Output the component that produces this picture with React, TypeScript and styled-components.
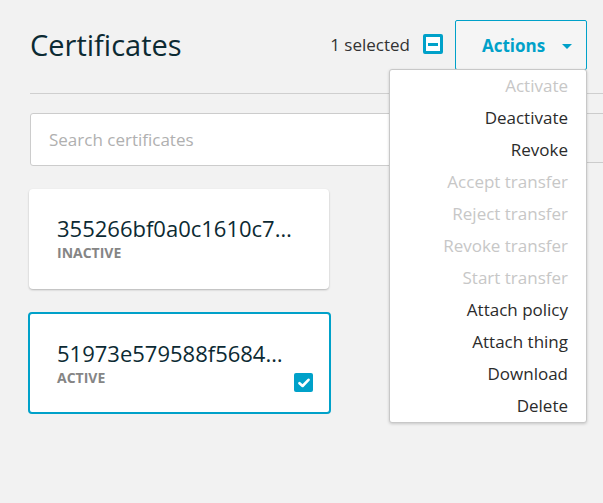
import React from "react";
import styled, { createGlobalStyle } from "styled-components";

const Global = createGlobalStyle`
  html, body { margin: 0; padding: 0; background: #f2f2f2; overflow: hidden; }
  body { font-family: "Open Sans", "Noto Sans", sans-serif; width: 603px; height: 503px; }
`;

const Page = styled.div`
  padding: 20px 0 0 30px;
  width: 573px;
  height: 483px;
  overflow: hidden;
  display: flex;
  flex-direction: column;
`;

const Header = styled.div`
  display: flex;
  align-items: center;
  justify-content: space-between;
  height: 50px;
  flex-shrink: 0;
  padding-right: 16px;
`;

const Title = styled.h1`
  margin: 0;
  font-size: 29px;
  font-weight: 400;
  color: #0c2a33;
  margin-top: -2px;
`;

const Tools = styled.div`
  display: flex;
  align-items: center;
`;

const SelectedText = styled.span`
  font-size: 17px;
  color: #333;
  margin-right: 13px;
  margin-top: -1px;
`;

const Indeterminate = styled.span`
  box-sizing: border-box;
  width: 20px;
  height: 20px;
  border: 3px solid #00a1c9;
  border-radius: 2px;
  background: #fff;
  display: flex;
  align-items: center;
  justify-content: center;
  margin-right: 12px;
  margin-top: -2px;
  &::after {
    content: "";
    width: 10px;
    height: 3px;
    background: #00a1c9;
  }
`;

const Dropdown = styled.div`
  position: relative;
`;

const ActionsButton = styled.button`
  box-sizing: border-box;
  width: 132px;
  height: 50px;
  border: 1px solid #00a1c9;
  border-radius: 2px;
  background: #f5f5f5;
  color: #00a1c9;
  font-family: inherit;
  font-size: 17px;
  font-weight: 700;
  display: flex;
  align-items: center;
  padding: 0 0 0 26px;
  cursor: pointer;
`;

const Caret = styled.span`
  margin-left: 17px;
  width: 0;
  height: 0;
  border-left: 5px solid transparent;
  border-right: 5px solid transparent;
  border-top: 5px solid #00a1c9;
  margin-top: 2px;
`;

const Menu = styled.ul`
  position: absolute;
  top: 49px;
  right: 0;
  width: 198px;
  box-sizing: border-box;
  margin: 0;
  padding: 0;
  list-style: none;
  background: #fff;
  border: 1px solid #c8c8c8;
  border-radius: 3px;
  box-shadow: 0 1px 3px rgba(0, 0, 0, 0.18);
  z-index: 10;
`;

const MenuItem = styled.li<{ $disabled?: boolean }>`
  height: 32px;
  line-height: 32px;
  text-align: right;
  padding-right: 18px;
  font-size: 17px;
  color: ${(p) => (p.$disabled ? "#c7c7c7" : "#2b2b2b")};
`;

const Divider = styled.hr`
  margin: 23px 0 0 0;
  border: none;
  border-top: 1px solid #cfcfcf;
  width: 590px;
  flex-shrink: 0;
`;

const SearchRow = styled.div`
  margin-top: 19px;
  display: flex;
  align-items: flex-start;
  gap: 10px;
  width: 640px;
  flex-shrink: 0;
`;

const SearchInput = styled.input`
  box-sizing: border-box;
  flex: 1;
  min-width: 0;
  height: 53px;
  border: 1px solid #cccccc;
  border-radius: 3px;
  background: #fff;
  padding: 0 18px;
  font-family: inherit;
  font-size: 17px;
  color: #333;
  &::placeholder { color: #b0b0b0; }
  outline: none;
`;

const SideButton = styled.button`
  box-sizing: border-box;
  width: 90px;
  height: 50px;
  border: 1px solid #cccccc;
  border-radius: 2px;
  background: #f0f0f0;
  padding: 0 0 0 21px;
  display: flex;
  align-items: center;
  flex-shrink: 0;
`;

const Cards = styled.div`
  margin-top: 23px;
  display: flex;
  flex-direction: column;
  gap: 23px;
  align-items: flex-start;
`;

const Card = styled.div<{ $selected?: boolean }>`
  position: relative;
  box-sizing: border-box;
  width: ${(p) => (p.$selected ? "303px" : "300px")};
  height: ${(p) => (p.$selected ? "102px" : "100px")};
  margin-left: ${(p) => (p.$selected ? "-2px" : "-1px")};
  background: #fff;
  border-radius: 4px;
  border: ${(p) => (p.$selected ? "2px solid #00a1c9" : "none")};
  box-shadow: ${(p) => (p.$selected ? "none" : "0 1px 2px rgba(0,0,0,0.25)")};
  padding: ${(p) => (p.$selected ? "24px 0 0 27px" : "24px 0 0 28px")};
`;

const CardId = styled.div`
  font-size: 22px;
  color: #0c2a33;
  line-height: normal;
  white-space: nowrap;
`;

const Status = styled.div`
  font-size: 14px;
  font-weight: 700;
  color: #858585;
  line-height: normal;
`;

const CheckBox = styled.span`
  position: absolute;
  right: 16px;
  bottom: 20px;
  width: 19px;
  height: 19px;
  border-radius: 2px;
  background: #00a1c9;
  display: flex;
  align-items: center;
  justify-content: center;
`;

const items: [string, boolean][] = [
  ["Activate", true],
  ["Deactivate", false],
  ["Revoke", false],
  ["Accept transfer", true],
  ["Reject transfer", true],
  ["Revoke transfer", true],
  ["Start transfer", true],
  ["Attach policy", false],
  ["Attach thing", false],
  ["Download", false],
  ["Delete", false],
];

export default function App() {
  return (
    <>
      <Global />
      <Page>
        <Header>
          <Title>Certificates</Title>
          <Tools>
            <SelectedText>1 selected</SelectedText>
            <Indeterminate />
            <Dropdown>
              <ActionsButton>
                Actions
                <Caret />
              </ActionsButton>
              <Menu>
                {items.map(([label, disabled]) => (
                  <MenuItem key={label} $disabled={disabled}>
                    {label}
                  </MenuItem>
                ))}
              </Menu>
            </Dropdown>
          </Tools>
        </Header>
        <Divider />
        <SearchRow>
          <SearchInput placeholder="Search certificates" />
          <SideButton aria-label="Filter">
            <svg width="14" height="14" viewBox="0 0 14 14">
              <path d="M1 4 H13 M3 8 H11 M5 12 H9" stroke="#444" strokeWidth="1.5" fill="none" />
            </svg>
          </SideButton>
        </SearchRow>
        <Cards>
          <Card>
            <CardId>355266bf0a0c1610c7…</CardId>
            <Status>INACTIVE</Status>
          </Card>
          <Card $selected>
            <CardId>51973e579588f5684…</CardId>
            <Status>ACTIVE</Status>
            <CheckBox>
              <svg width="12" height="10" viewBox="0 0 12 10">
                <path d="M1.5 5.2 L4.6 8 L10.5 1.8" stroke="#fff" strokeWidth="2.6" fill="none" strokeLinecap="round" strokeLinejoin="round" />
              </svg>
            </CheckBox>
          </Card>
        </Cards>
      </Page>
    </>
  );
}
